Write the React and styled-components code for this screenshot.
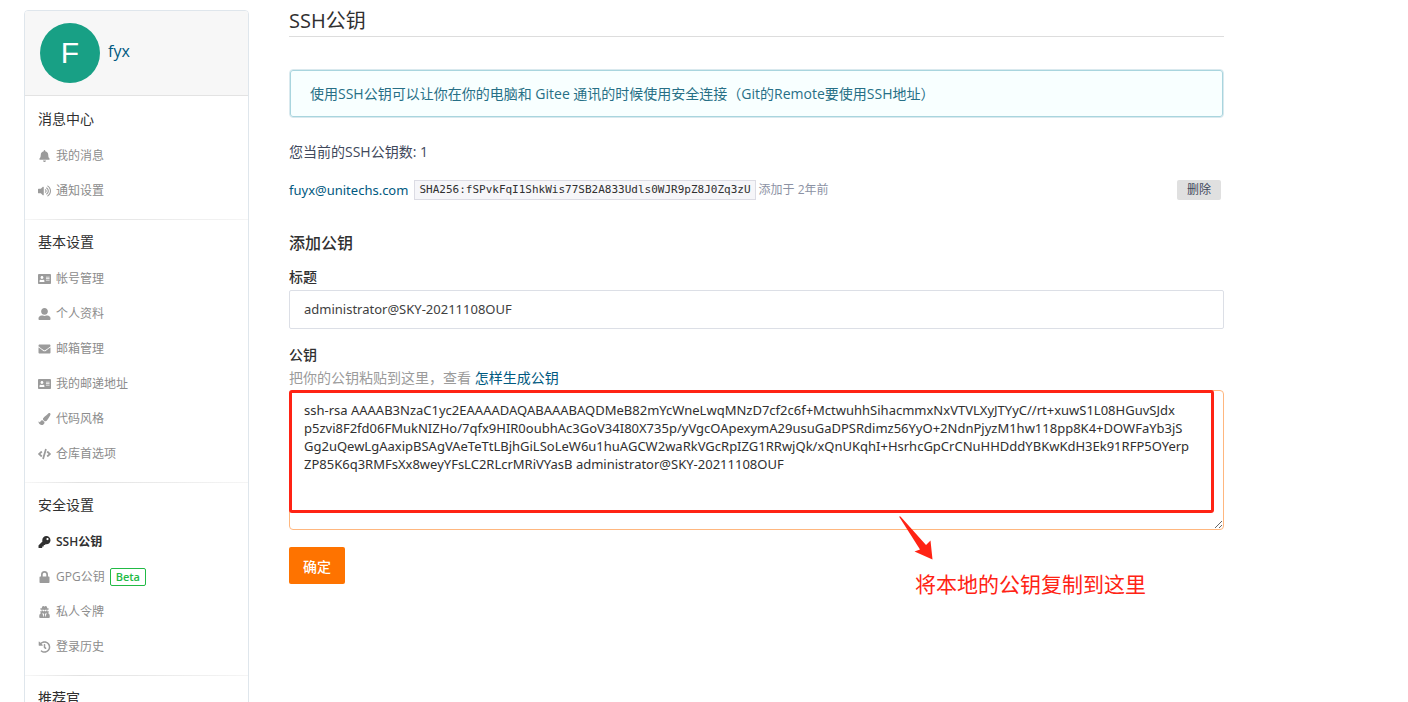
import React, { useState } from 'react';
import styled, { createGlobalStyle } from 'styled-components';
import {
    FaAddressCard,
    FaBell,
    FaCode,
    FaEnvelope,
    FaHistory,
    FaKey,
    FaPaintBrush,
    FaUserAlt,
    FaUserSecret,
    FaVolumeUp,
} from 'react-icons/fa';

const GlobalStyle = createGlobalStyle`
    * {
        box-sizing: border-box;
    }
    body {
        margin: 0;
        background-color: #ffffff;
        color: #40485b;
        font-family: "Open Sans", "Noto Sans CJK SC", sans-serif;
        font-size: 14px;
        line-height: 20px;
    }
    button, input, textarea {
        font-family: inherit;
    }
    a {
        color: #005980;
        text-decoration: none;
    }
`;

const Page = styled.div`
    display: flex;
    align-items: flex-start;
    gap: 40px;
    max-width: 1248px;
    height: 100vh;
    padding: 0 24px;
    overflow: hidden;
`;

const Sidebar = styled.aside`
    flex: 0 0 225px;
    margin-top: 10px;
    border: 1px solid #dfe6ec;
    border-radius: 4px;
`;

const Profile = styled.div`
    display: flex;
    align-items: center;
    gap: 8px;
    padding: 12px 15px;
    border-bottom: 1px solid #e3e3e3;
    border-radius: 3px 3px 0 0;
    background-color: #f7f7f7;
`;

const Avatar = styled.div`
    width: 60px;
    height: 60px;
    border-radius: 50%;
    background-color: #18a085;
    color: #ffffff;
    font-family: "Liberation Sans", sans-serif;
    font-size: 30px;
    line-height: 60px;
    text-align: center;
`;

const UserName = styled.a`
    padding-bottom: 4px;
    font-size: 16px;
    line-height: 24px;
`;

const Menu = styled.nav`
    padding-top: 1px;
`;

const Section = styled.section`
    padding: 12px 13px 11px;
    border-bottom: 1px solid #ececec;
    border-image: linear-gradient(to right, #f7f7f7, #e2e2e2 25%, #f5f5f5) 1;
    &:last-child {
        border-bottom: none;
    }
`;

const SectionTitle = styled.div`
    margin-bottom: 9px;
    color: #303030;
`;

const MenuItem = styled.a`
    display: flex;
    align-items: center;
    height: 35px;
    color: ${props => props.$active ? '#303030' : '#8c8c8c'};
    font-size: 12px;
    font-weight: ${props => props.$active ? 600 : 400};
    svg {
        width: 13px;
        height: 12px;
        margin-right: 5px;
        color: ${props => props.$active ? '#303030' : '#9b9b9b'};
    }
`;

const Beta = styled.span`
    margin-left: 5px;
    padding: 0 5px;
    border: 1px solid #21ba45;
    border-radius: 2px;
    color: #21ba45;
    font-size: 11px;
    font-weight: 600;
    line-height: 16px;
`;

const Main = styled.main`
    flex: 1;
    min-width: 0;
    padding-top: 6px;
`;

const Title = styled.h1`
    margin: 0;
    border-bottom: 1px solid #dddddd;
    color: #303030;
    font-size: 20px;
    font-weight: 400;
    line-height: 30px;
`;

const Message = styled.div`
    margin-top: 32px;
    padding: 14px 20px 13px;
    border: 1px solid #d9e9ee;
    border-radius: 4px;
    box-shadow: 0 0 0 1px #a9d5de inset;
    background-color: #f8ffff;
    color: #276f86;
`;

const KeyCount = styled.div`
    margin-top: 24px;
`;

const KeyRow = styled.div`
    display: flex;
    align-items: center;
    height: 20px;
    margin-top: 18px;
    padding-right: 3px;
`;

const KeyName = styled.a`
    font-family: "Noto Sans", "Noto Sans CJK SC", sans-serif;
    font-size: 13px;
`;

const Fingerprint = styled.code`
    margin: 0 3px 0 6px;
    padding: 0 4px;
    border: 1px solid #dcdce4;
    background-color: #f6f6f9;
    color: #303030;
    font-family: "DejaVu Sans Mono", monospace;
    font-size: 11px;
    line-height: 18px;
`;

const AddedAt = styled.span`
    color: #8c92a4;
    font-size: 12px;
`;

const DeleteButton = styled.button`
    height: 20px;
    margin-left: auto;
    padding: 0 10px;
    border: none;
    border-radius: 2px;
    background-color: #e0e0e0;
    color: #40485b;
    font-size: 12px;
    line-height: 20px;
    cursor: pointer;
`;

const SubTitle = styled.h2`
    margin: 32px 0 14px;
    color: #303030;
    font-size: 16px;
    font-weight: 500;
    line-height: 22px;
`;

const Label = styled.label`
    display: block;
    margin-bottom: 4px;
    color: #303030;
    font-weight: 500;
    line-height: 18px;
`;

const Input = styled.input`
    display: block;
    width: 100%;
    height: 39px;
    margin-bottom: 17px;
    padding: 0 14px 2px;
    border: 1px solid #dcdfe6;
    border-radius: 2px;
    color: #404040;
    font-family: "Noto Sans", "Noto Sans CJK SC", sans-serif;
    font-size: 13px;
    outline: none;
`;

const Hint = styled.div`
    margin-bottom: 2px;
    color: #9b9b9b;
`;

const KeyField = styled.div`
    position: relative;
`;

const TextArea = styled.textarea`
    display: block;
    width: 100%;
    height: 140px;
    padding: 10px 14px;
    border: 1px solid #ffb77f;
    border-radius: 4px;
    color: #303030;
    font-family: "Noto Sans", "Noto Sans CJK SC", sans-serif;
    font-size: 13px;
    line-height: 18px;
    word-break: break-all;
    resize: vertical;
    outline: none;
`;

const Highlight = styled.div`
    position: absolute;
    top: 0;
    left: 0;
    right: 10px;
    height: 123px;
    border: 3px solid #ff2314;
    border-radius: 3px;
    pointer-events: none;
`;

const Callout = styled.div`
    position: absolute;
    top: 126px;
    left: 610px;
    color: #ff2314;
    font-size: 21px;
    line-height: 30px;
    white-space: nowrap;
    pointer-events: none;
    svg {
        display: block;
    }
`;

const CalloutText = styled.div`
    padding: 9px 0 0 16px;
`;

const SubmitButton = styled.button`
    display: block;
    height: 37px;
    margin-top: 17px;
    padding: 0 14px;
    border: none;
    border-radius: 2px;
    background-color: #fe7300;
    color: #ffffff;
    font-size: 14px;
    font-weight: 500;
    cursor: pointer;
`;

const LockIcon = () => (
    <svg viewBox="0 0 13 12" fill="currentColor">
        <path d="M2.2 5.6H3V3.5a3.5 3.5 0 0 1 7 0v2.1h.8a.7.7 0 0 1 .7.7v5a.7.7 0 0 1-.7.7H2.2a.7.7 0 0 1-.7-.7v-5a.7.7 0 0 1 .7-.7zm2.5 0h3.6V3.5a1.8 1.8 0 0 0-3.6 0z" />
    </svg>
);

const sections = [
    {
        title: '消息中心',
        items: [
            { icon: FaBell, text: '我的消息' },
            { icon: FaVolumeUp, text: '通知设置' },
        ],
    },
    {
        title: '基本设置',
        items: [
            { icon: FaAddressCard, text: '帐号管理' },
            { icon: FaUserAlt, text: '个人资料' },
            { icon: FaEnvelope, text: '邮箱管理' },
            { icon: FaAddressCard, text: '我的邮递地址' },
            { icon: FaPaintBrush, text: '代码风格' },
            { icon: FaCode, text: '仓库首选项' },
        ],
    },
    {
        title: '安全设置',
        items: [
            { icon: FaKey, text: 'SSH公钥', active: true },
            { icon: LockIcon, text: 'GPG公钥', beta: true },
            { icon: FaUserSecret, text: '私人令牌' },
            { icon: FaHistory, text: '登录历史' },
        ],
    },
    { title: '推荐官', items: [] },
];

const publicKey = [
    'ssh-rsa AAAAB3NzaC1yc2EAAAADAQABAAABAQDMeB82mYcWneLwqMNzD7cf2c6f+MctwuhhSihacmmxNxVTVLXyJTYyC//rt+xuwS1L08HGuvSJdx',
    'p5zvi8F2fd06FMukNIZHo/7qfx9HIR0oubhAc3GoV34I80X735p/yVgcOApexymA29usuGaDPSRdimz56YyO+2NdnPjyzM1hw118pp8K4+DOWFaYb3jS',
    'Gg2uQewLgAaxipBSAgVAeTeTtLBjhGiLSoLeW6u1huAGCW2waRkVGcRpIZG1RRwjQk/xQnUKqhI+HsrhcGpCrCNuHHDddYBKwKdH3Ek91RFP5OYerp',
    'ZP85K6q3RMFsXx8weyYFsLC2RLcrMRiVYasB administrator@SKY-20211108OUF',
].join('\n');

const App = () => {
    const [values, setValues] = useState({title: 'administrator@SKY-20211108OUF', key: publicKey});

    const handleInputChange = e => {
        const {name, value} = e.target;
        setValues({...values, [name]: value});
    }

    return (
        <>
            <GlobalStyle />
            <Page>
                <Sidebar>
                    <Profile>
                        <Avatar>F</Avatar>
                        <UserName href="#">fyx</UserName>
                    </Profile>
                    <Menu>
                        {sections.map(section => (
                            <Section key={section.title}>
                                <SectionTitle>{section.title}</SectionTitle>
                                {section.items.map(({icon: Icon, text, active, beta}) => (
                                    <MenuItem key={text} href="#" $active={active}>
                                        <Icon />
                                        {text}
                                        {beta && <Beta>Beta</Beta>}
                                    </MenuItem>
                                ))}
                            </Section>
                        ))}
                    </Menu>
                </Sidebar>
                <Main>
                    <Title>SSH公钥</Title>
                    <Message>使用SSH公钥可以让你在你的电脑和 Gitee 通讯的时候使用安全连接（Git的Remote要使用SSH地址）</Message>
                    <KeyCount>您当前的SSH公钥数: 1</KeyCount>
                    <KeyRow>
                        <KeyName href="#">fuyx@unitechs.com</KeyName>
                        <Fingerprint>SHA256:fSPvkFqI1ShkWis77SB2A833Udls0WJR9pZ8J0Zq3zU</Fingerprint>
                        <AddedAt>添加于 2年前</AddedAt>
                        <DeleteButton type="button">删除</DeleteButton>
                    </KeyRow>
                    <SubTitle>添加公钥</SubTitle>
                    <Label htmlFor="title">标题</Label>
                    <Input id="title" type="text" name="title" value={values.title} onChange={handleInputChange} />
                    <Label htmlFor="key">公钥</Label>
                    <Hint>把你的公钥粘贴到这里，查看 <a href="#">怎样生成公钥</a></Hint>
                    <KeyField>
                        <TextArea id="key" name="key" spellCheck={false} value={values.key} onChange={handleInputChange} />
                        <Highlight />
                        <Callout>
                            <svg width="34" height="44" viewBox="0 0 34 44" fill="#ff2314">
                                <path d="M0 0.5 L1.5 0.5 L27 29 L31.5 24.5 L33.5 43.5 L15.5 35.5 L21 33.5 Z" />
                            </svg>
                            <CalloutText>将本地的公钥复制到这里</CalloutText>
                        </Callout>
                    </KeyField>
                    <SubmitButton type="button">确定</SubmitButton>
                </Main>
            </Page>
        </>
    );
}

export default App;
